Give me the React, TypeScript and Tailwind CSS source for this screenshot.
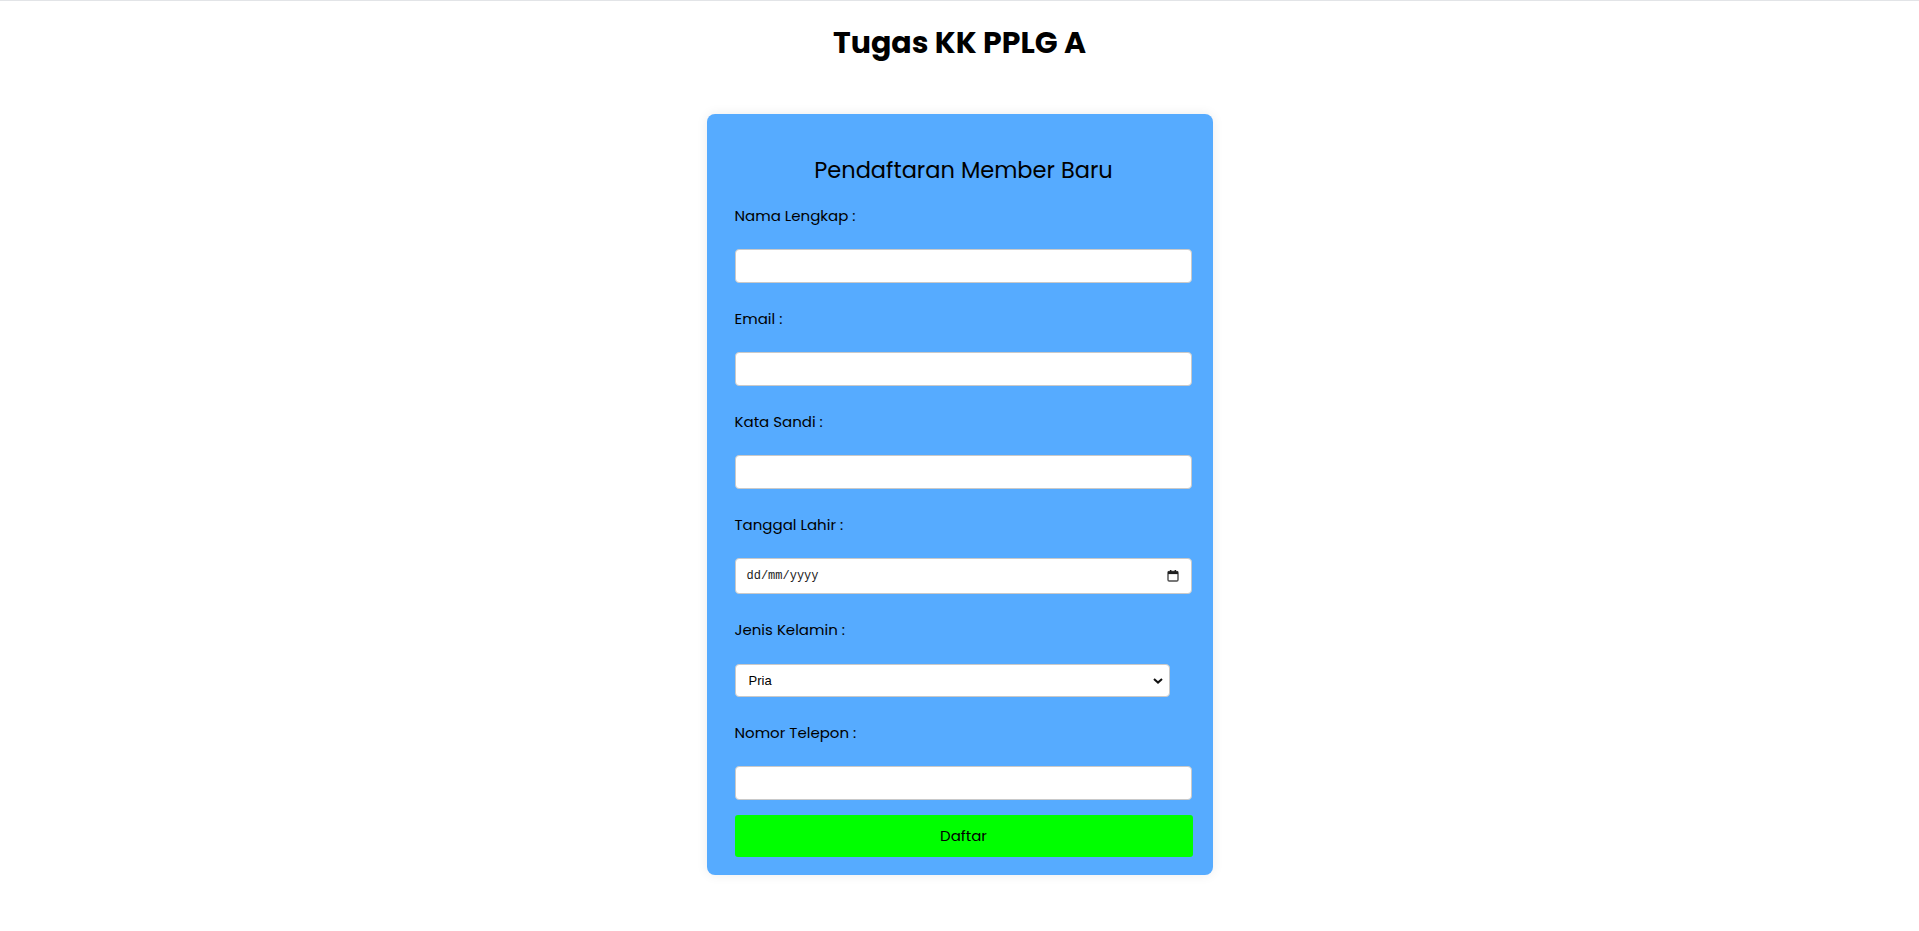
import React from "react";

const fields = [
  { label: "Nama Lengkap :", type: "text" },
  { label: "Email :", type: "email" },
  { label: "Kata Sandi :", type: "password" },
];

function CalendarIcon() {
  return (
    <svg width="12" height="12" viewBox="0 0 12 12" className="shrink-0">
      <rect x="1" y="1.5" width="10" height="9.5" rx="1.2" fill="none" stroke="#4b4b4b" strokeWidth="1.4" />
      <rect x="1" y="1.5" width="10" height="2.6" fill="#1f1f1f" />
      <rect x="3" y="0" width="1.4" height="2" fill="#1f1f1f" />
      <rect x="7.6" y="0" width="1.4" height="2" fill="#1f1f1f" />
    </svg>
  );
}

export default function App() {
  return (
    <div className="min-h-screen bg-white text-black" style={{ fontFamily: "'Poppins', 'Noto Sans', sans-serif" }}>
      <div className="h-px bg-[#e2e4e7]" />

      <h1 className="mt-[22px] text-center text-[30px] font-bold leading-[40px]">Tugas KK PPLG A</h1>

      {/* form card */}
      <div className="mx-auto mt-[51px] w-[506px] rounded-lg bg-[#56abff] pl-[28px] pr-[20px] pt-[38px] pb-[18px] shadow-[0_0_12px_rgba(0,0,0,0.08)]">
        <h2 className="text-center text-[22.5px] leading-[36px]">Pendaftaran Member Baru</h2>

        <form className="mt-[16px] flex flex-col" onSubmit={(e) => e.preventDefault()}>
          {fields.map((f) => (
            <div key={f.label} className="mb-[24px] flex flex-col">
              <label className="text-[15px] leading-6">{f.label}</label>
              <input
                type={f.type}
                className="mt-[21px] h-[34px] w-[457px] rounded-[4px] border border-[#c9c9c9] bg-white px-2 text-[13px] outline-none"
              />
            </div>
          ))}

          <div className="mb-[24px] flex flex-col">
            <label className="text-[15px] leading-6">Tanggal Lahir :</label>
            <div className="mt-[21px] flex h-[36px] w-[457px] items-center justify-between rounded-[4px] border border-[#c9c9c9] bg-white pl-[11px] pr-[12px]">
              <span className="text-[12px] text-[#222]" style={{ fontFamily: "'Liberation Mono', monospace" }}>
                dd/mm/yyyy
              </span>
              <CalendarIcon />
            </div>
          </div>

          <div className="mb-[24px] flex flex-col">
            <label className="text-[15px] leading-6">Jenis Kelamin :</label>
            <div className="relative mt-[22px] w-[435px]">
              <select
                className="h-[33px] w-full appearance-none rounded-[4px] border border-[#c9c9c9] bg-white pl-[13px] text-[13px] outline-none"
                style={{ fontFamily: "'Liberation Sans', Arial, sans-serif" }}
                defaultValue="Pria"
              >
                <option>Pria</option>
                <option>Wanita</option>
              </select>
              <svg width="10" height="6" viewBox="0 0 10 6" className="pointer-events-none absolute right-[7px] top-[14px]">
                <path d="M1 1l4 3.6L9 1" fill="none" stroke="#111" strokeWidth="2" />
              </svg>
            </div>
          </div>

          <div className="flex flex-col">
            <label className="text-[15px] leading-6">Nomor Telepon :</label>
            <input
              type="tel"
              className="mt-[21px] h-[34px] w-[457px] rounded-[4px] border border-[#c9c9c9] bg-white px-2 text-[13px] outline-none"
            />
          </div>

          <button type="submit" className="mt-[15px] h-[42px] w-full rounded-[3px] bg-[#00ff00] text-[15px]">
            Daftar
          </button>
        </form>
      </div>
    </div>
  );
}
